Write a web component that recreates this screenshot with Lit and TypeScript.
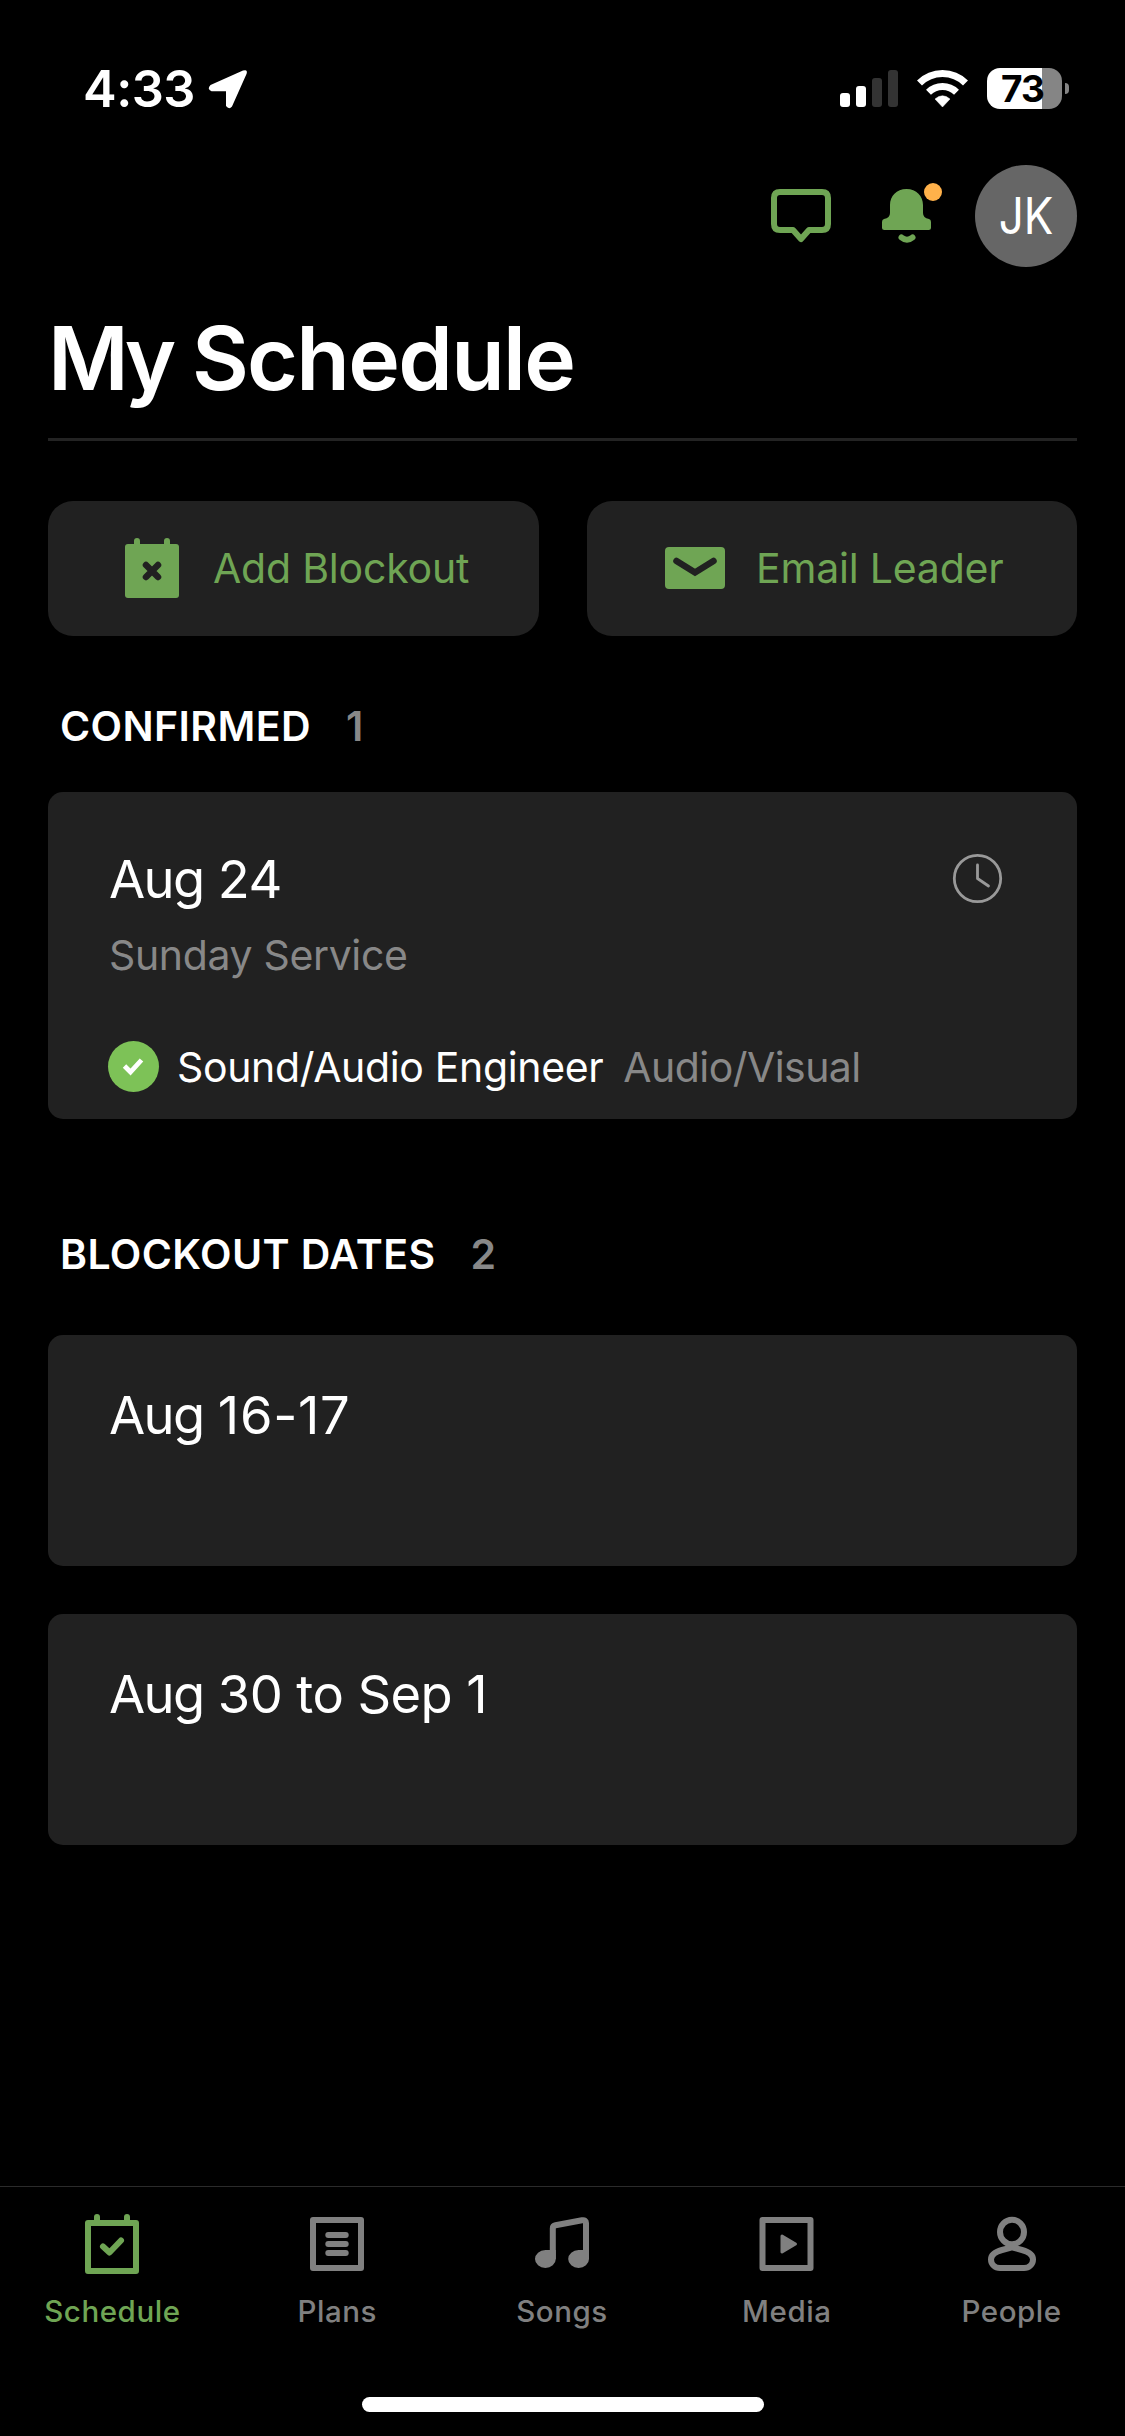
import { LitElement, html, css, svg } from "lit";
import { customElement, property } from "lit/decorators.js";

const icons: Record<string, unknown> = {
  schedule: svg`<g fill="none" stroke="currentColor" stroke-width="6" stroke-linecap="round" stroke-linejoin="round">
    <path d="M6 12H54V60H6Z"/><path d="M15 6V12M45 6V12"/><path d="M21 35.500L27.500 41.500L39 29.500"/></g>`,
  plans: svg`<g fill="none" stroke="currentColor" stroke-width="6" stroke-linecap="round" stroke-linejoin="round">
    <path d="M6 9H54V57H6Z"/><path d="M21.300 24H38.700M21.300 33H38.700M21.300 42H38.700"/></g>`,
  songs: svg`<path d="M20.800 48V17.500Q20.800 14.800 23.500 14.300L50 9.300Q54 8.600 54 12V48" fill="none" stroke="currentColor" stroke-width="6" stroke-linejoin="round"/>
    <path d="M23.800 48V39H13.400A10.400 9 0 1 0 23.800 48ZM57 48V39H46.600A10.400 9 0 1 0 57 48Z" fill="currentColor"/>`,
  media: svg`<path d="M5.500 9H53.500V57H5.500Z" fill="none" stroke="currentColor" stroke-width="6" stroke-linejoin="round"/>
    <path d="M25 25L38.500 33L25 41Z" fill="currentColor" stroke="currentColor" stroke-width="3" stroke-linejoin="round"/>`,
  people: svg`<g fill="none" stroke="currentColor" stroke-width="6" stroke-linejoin="round">
    <ellipse cx="30" cy="21" rx="12" ry="12.300"/>
    <path d="M30 36.300L40 39C46.500 40.800 51 43.500 51 48.500C51 53.500 47 57 42 57H18C13 57 9 53.500 9 48.500C9 43.500 13.500 40.800 20 39Z"/></g>`,
};

const base = css`
  :host { display: block; font-family: Inter, "Liberation Sans", sans-serif; }
  * { box-sizing: border-box; }
  svg { display: block; flex: none; overflow: visible; }
`;

@customElement("status-bar")
class StatusBar extends LitElement {
  static styles = [base, css`
    .bar { display: flex; height: 136px; padding: 68px 56px 0 83px; align-items: flex-start; }
    .time { font-size: 50.500px; line-height: 42px; font-weight: 600; letter-spacing: -0.5px; width: 125px; white-space: nowrap; }
    .arrow { margin-top: 1px; }
    .right { margin-left: auto; display: flex; }
    .battery { margin-left: 19px; display: flex; align-items: center; gap: 3px; }
    .cell { width: 75px; height: 41px; border-radius: 13px; background: linear-gradient(90deg, #fff 55px, #858585 55px); color: #000;
      font-size: 37px; line-height: 42px; font-weight: 700; text-align: center; letter-spacing: -1px; padding-right: 4px; }
    .nub { width: 4px; height: 11px; border-radius: 0 4px 4px 0; background: #858585; }
  `];
  render() {
    return html`<div class="bar">
      <div class="time">4:33</div>
      <svg class="arrow" width="40" height="41" viewBox="0 0 40 41"><path d="M2.500 16L35 1.600Q40 0 38.600 4.800L24 37.500Q21 41 18 37V22.300H3.500Q-1.500 20 2.500 16Z" fill="#fff"/></svg>
      <div class="right">
        <svg width="58" height="41" viewBox="0 0 58 41">
          <rect x="0" y="25" width="10" height="14" rx="3" fill="#fff"/><rect x="16" y="18" width="10" height="21" rx="3" fill="#fff"/>
          <rect x="32" y="10" width="10" height="29" rx="3" fill="#333"/><rect x="48" y="2" width="10" height="37" rx="3" fill="#333"/>
        </svg>
        <svg width="70" height="41" viewBox="0 0 70 41">
          <g fill="none" stroke="#fff" stroke-width="7">
          <path d="M21.500 15A32.500 32.500 0 0 1 67.500 15"/><path d="M30.500 24.200A20 20 0 0 1 58.500 24.200"/></g>
          <path d="M37 31Q44.500 24.500 52 31L44.500 39Z" fill="#fff" stroke="#fff" stroke-width="0.500" stroke-linejoin="round"/>
        </svg>
        <div class="battery"><div class="cell">73</div><div class="nub"></div></div>
      </div>
    </div>`;
  }
}

@customElement("app-header")
class AppHeader extends LitElement {
  static styles = [base, css`
    .actions { display: flex; justify-content: flex-end; align-items: flex-start; height: 134px; padding: 29px 48px 0 0; }
    .chat { margin: 21px 48px 0 0; }
    .bell { margin: 15px 34px 0 0; }
    .avatar { width: 102px; height: 102px; border-radius: 50%; background: #666; color: #fff; font-size: 50px; line-height: 102px; text-align: center; }
    .avatar span { display: inline-block; transform: scaleX(.88); }
    .title { margin: 0 48px; height: 171px; padding-top: 38px; border-bottom: 3px solid #232323; font-size: 87.500px; line-height: 100px; font-weight: 600; color: #fff; letter-spacing: -1.700px; white-space: nowrap; }
    .tight { letter-spacing: -4.700px; }
  `];
  render() {
    return html`<div class="actions">
      <svg class="chat" width="62" height="60" viewBox="0 0 62 60"><path d="M10 6H52Q58 6 58 12V38Q58 44 52 44H39L31 53L23 44H10Q4 44 4 38V12Q4 6 10 6Z" fill="none" stroke="#6fa554" stroke-width="6" stroke-linejoin="round"/></svg>
      <svg class="bell" width="61" height="66" viewBox="0 0 61 66">
        <path d="M26.500 9C36.500 9 43 16 43 25V33Q43 38 49 39Q51 39.500 51 42V47.500Q51 50 48.500 50H4.500Q2 50 2 47.500V42Q2 39.500 4 39Q10 38 10 33V25C10 16 16.500 9 26.500 9Z" fill="#6fa554"/>
        <path d="M21.500 57.500Q27 62 32.500 57.500" fill="none" stroke="#6fa554" stroke-width="6" stroke-linecap="round"/>
        <circle cx="53" cy="12" r="9" fill="#ffb14a"/></svg>
      <div class="avatar"><span>JK</span></div>
    </div>
    <div class="title"><span class="tight">My</span> Schedule</div>`;
  }
}

@customElement("section-title")
class SectionTitle extends LitElement {
  @property() label = "";
  @property() count = "";
  static styles = [base, css`
    .row { display: flex; gap: 35px; font-weight: 600; font-size: 41px; line-height: 50px; color: #fff; white-space: nowrap; padding-left: 12px; }
    .label { letter-spacing: 0.400px; }
    .count { color: #888; }
  `];
  render() {
    return html`<div class="row"><span class="label">${this.label}</span><span class="count">${this.count}</span></div>`;
  }
}

@customElement("tab-bar")
class TabBar extends LitElement {
  static styles = [base, css`
    .tabs { display: grid; grid-template-columns: repeat(5, 1fr); height: 211px; padding: 24px 1px 0 0; border-top: 1px solid #2b2b2b; }
    .tab { display: flex; flex-direction: column; align-items: center; gap: 16px; color: #808080; font-size: 29.500px; line-height: 36px; font-weight: 500; letter-spacing: 0.550px; }
    .tab.active { color: #6fa554; }
    .home { width: 402px; height: 15px; border-radius: 8px; background: #fff; margin: 0 auto 24px; }
  `];
  render() {
    const tabs = ["Schedule", "Plans", "Songs", "Media", "People"];
    return html`<div class="tabs">${tabs.map((t, i) => html`<div class="tab ${i === 0 ? "active" : ""}">
      <svg width="60" height="66" viewBox="0 0 60 66">${icons[t.toLowerCase()]}</svg><span>${t}</span></div>`)}</div>
      <div class="home"></div>`;
  }
}

@customElement("app-root")
class AppRoot extends LitElement {
  static styles = [base, css`
    :host { background: #000; color: #fff; }
    .page { height: 2436px; display: flex; flex-direction: column; overflow: hidden; background: #000; }
    main { padding: 60px 48px 0; flex: 1; display: flex; flex-direction: column; }
    .buttons { display: grid; grid-template-columns: 1fr 1fr; gap: 48px; }
    .button { height: 135px; border-radius: 25px; background: #212121; color: #6fa554; display: flex; align-items: center; padding: 0 0 1px 77px; font-size: 41px; letter-spacing: -0.200px; white-space: nowrap; }
    .blockout span { margin-left: 34px; }
    .email { padding-left: 78.500px; }
    .email span { margin-left: 31px; }
    .card { background: #212121; border-radius: 15px; padding: 0 75px 0 61px; }
    .confirmed { margin-top: 65px; }
    .blockouts { margin-top: 110px; }
    .service { margin-top: 41px; height: 327px; padding-top: 56px; }
    .head { display: flex; justify-content: space-between; align-items: center; }
    .date { font-size: 52.500px; line-height: 62px; white-space: nowrap; letter-spacing: -0.600px; }
    .month { letter-spacing: -1.600px; }
    .range { letter-spacing: 0.700px; }
    .sub { color: #888; font-size: 41px; line-height: 50px; margin-top: 20px; white-space: nowrap; letter-spacing: -0.350px; }
    .role { display: flex; align-items: center; height: 51px; margin-top: 61px; margin-left: -1px; font-size: 41px; white-space: nowrap; letter-spacing: -0.350px; }
    .name { margin-left: 18px; }
    .team { color: #888; margin-left: 20px; letter-spacing: -0.550px; }
    .block { height: 231px; margin-top: 48px; padding-top: 49px; }
    .block.first { margin-top: 56px; }
  `];
  render() {
    return html`<div class="page">
      <status-bar></status-bar>
      <app-header></app-header>
      <main>
        <div class="buttons">
          <div class="button blockout">
            <svg width="54" height="60" viewBox="0 0 54 60"><path d="M12 3V12M42 3V12" stroke="#6fa554" stroke-width="6" stroke-linecap="round"/>
              <rect y="6" width="54" height="54" rx="3" fill="#6fa554"/><path d="M21 27L33 39M33 27L21 39" stroke="#212121" stroke-width="6.500" stroke-linecap="round"/></svg>
            <span>Add Blockout</span>
          </div>
          <div class="button email">
            <svg width="60" height="42" viewBox="0 0 60 42"><rect width="60" height="42" rx="4" fill="#6fa554"/>
              <path d="M11.500 14L30 25.500L48.500 14" fill="none" stroke="#212121" stroke-width="6.500" stroke-linecap="round"/></svg>
            <span>Email Leader</span>
          </div>
        </div>
        <section-title class="confirmed" label="CONFIRMED" count="1"></section-title>
        <div class="card service">
          <div class="head"><span class="date"><span class="month">Aug</span> 24</span>
            <svg width="50" height="50" viewBox="0 0 50 50"><g fill="none" stroke="#999" stroke-width="2.800" stroke-linecap="round" stroke-linejoin="round"><circle cx="25.500" cy="24.500" r="23.200"/><path d="M25.500 11V24.500L36.500 32"/></g></svg>
          </div>
          <div class="sub">Sunday Service</div>
          <div class="role">
            <svg width="51" height="51" viewBox="0 0 51 51"><circle cx="25.500" cy="25.500" r="25.500" fill="#7dc257"/><path d="M16.500 25L22.500 31L33.500 19" fill="none" stroke="#fff" stroke-width="4.800"/></svg>
            <span class="name">Sound/Audio Engineer</span><span class="team">Audio/Visual</span>
          </div>
        </div>
        <section-title class="blockouts" label="BLOCKOUT DATES" count="2"></section-title>
        <div class="card block first"><div class="date"><span class="month">Aug</span> <span class="range">16-17</span></div></div>
        <div class="card block"><div class="date"><span class="month">Aug</span> 30 to Sep 1</div></div>
      </main>
      <tab-bar></tab-bar>
    </div>`;
  }
}
